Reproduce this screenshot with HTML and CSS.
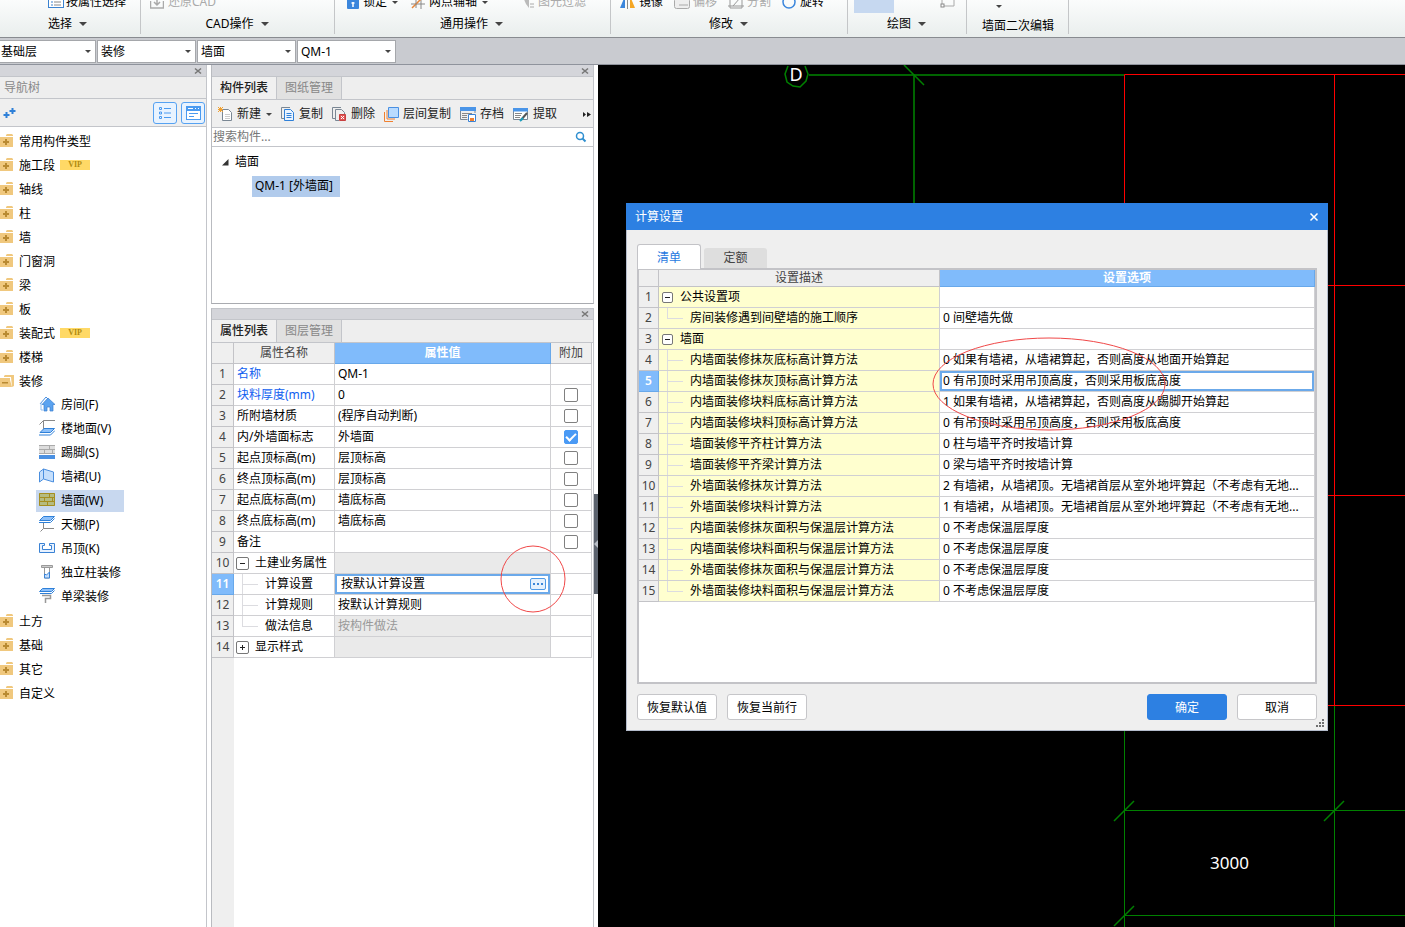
FILE: index.html
```html
<!DOCTYPE html>
<html lang="zh-CN">
<head>
<meta charset="utf-8">
<title>计算设置</title>
<link rel="stylesheet" href="styles.css">
</head>
<body>
<svg class="defs" aria-hidden="true">
  <symbol id="folder" viewBox="0 0 14 14"><path fill="#f0c87e" d="M0 3h13v10H0zM6 1l1-1h5l1 1v1H6z"/><path fill="#b98a32" d="M5 5h2v2h2v2H7v2H5V9H3V7h2z"/></symbol>
  <symbol id="folder-open" viewBox="0 0 14 14"><path fill="#f0c87e" d="M0 4h10v2l2 7H0z"/><path fill="#f0c87e" d="M4 2l1-1h9v11l-2 1-1-10H4z"/><path fill="#b98a32" d="M2 8h6v1.500H2z"/></symbol>
  <symbol id="close" viewBox="0 0 8 8"><path d="M1 1.500l6 5M7 1.500l-6 5" stroke="#777" stroke-width="1.600"/></symbol>
</svg>
<div class="app">
  <header class="ribbon">
    <section class="group g-select">
      <div class="tools"><button class="tool"><svg width="16" height="14"><rect x=".5" y=".5" width="15" height="12" fill="#fff" stroke="#3b82d0"/><path d="M3 4h2M3 7h2M3 10h2" stroke="#3b82d0"/><path d="M6 4h7M6 7h7M6 10h7" stroke="#888"/></svg>按属性选择</button></div>
      <button class="caption">选择<i class="caret big"></i></button>
    </section>
    <section class="group g-cad">
      <div class="tools"><button class="tool off"><svg width="14" height="14"><path d="M.5 6v7h13V6M7 2v8M4 7l3 3 3-3" fill="none" stroke="#aaa" stroke-width="1.500"/></svg>还原CAD</button></div>
      <button class="caption">CAD操作<i class="caret big"></i></button>
    </section>
    <section class="group g-common">
      <div class="tools">
        <button class="tool"><svg width="12" height="14"><rect y="3" width="12" height="11" rx="1" fill="#3b86dc"/><path d="M6 7v5M4.500 8h3" stroke="#fff" stroke-width="1.500"/></svg>锁定<i class="caret"></i></button>
        <button class="tool"><svg width="14" height="14"><path d="M0 9h14M10 2v12" stroke="#888"/><path d="M1 13L11 3" stroke="#e8863a" stroke-width="1.500"/><path d="M5 4v9" stroke="#888"/></svg>两点辅轴<i class="caret"></i></button>
        <button class="tool off"><svg width="11" height="14"><path d="M0 2h6v11L3 9z" fill="#bbb"/><path d="M7 9h4M7 12h4" stroke="#aaa"/></svg>图元过滤</button>
      </div>
      <button class="caption">通用操作<i class="caret big"></i></button>
    </section>
    <section class="group g-edit">
      <div class="tools">
        <button class="tool"><svg width="15" height="14"><path d="M5 1v12H0z" fill="#3b86dc"/><path d="M10 1v12h5z" fill="#f5a623"/><path d="M7.500 0v14" stroke="#888"/></svg>镜像</button>
        <button class="tool off tight"><svg width="16" height="14"><rect x=".5" y="3.500" width="15" height="10" rx="2" fill="#eee" stroke="#aaa"/><path d="M5 10h9" stroke="#aaa"/></svg>偏移</button>
        <button class="tool off tight"><svg width="16" height="14"><path d="M2 1v12h12V1M0 11h16M5 11l7-8" fill="none" stroke="#999"/></svg>分割</button>
        <button class="tool"><svg width="14" height="14"><circle cx="7" cy="7" r="6" fill="none" stroke="#3b86dc" stroke-width="1.500"/></svg>旋转</button>
      </div>
      <button class="caption">修改<i class="caret big"></i></button>
    </section>
    <section class="group g-draw">
      <div class="tools"><span class="active-tool"></span><svg width="16" height="14"><path d="M2 10V2h12v9H4" fill="none" stroke="#aaa"/><rect x="1" y="9" width="3" height="3" fill="#fff" stroke="#888"/></svg></div>
      <button class="caption">绘图<i class="caret big"></i></button>
    </section>
    <section class="group g-second">
      <div class="tools"><i class="caret"></i></div>
      <div class="caption low">墙面二次编辑</div>
    </section>
  </header>

  <nav class="context">
    <span class="pick"><select aria-label="楼层"><option>基础层</option></select></span>
    <span class="pick"><select aria-label="类别"><option>装修</option></select></span>
    <span class="pick"><select aria-label="类型"><option>墙面</option></select></span>
    <span class="pick"><select aria-label="构件"><option>QM-1</option></select></span>
  </nav>

  <main class="work">
    <aside class="panel nav">
      <div class="strip"><button class="x" aria-label="关闭"><svg width="8" height="8"><use href="#close"/></svg></button></div>
      <h2 class="nav-title">导航树</h2>
      <div class="nav-tools">
        <svg class="plus" width="13" height="12"><path d="M3.500 5v6M0.500 8h6M9.500 1v6M6.500 4h6" stroke="#2f80d8" stroke-width="2"/></svg>
        <button class="square" aria-label="列表"><svg width="14" height="14"><path d="M1.500 1.500h2v2h-2zM1.500 6h2v2h-2zM1.500 10.500h2v2h-2z" fill="none" stroke="#4a9af0"/><path d="M6 2.500h7M6 7h7M6 11.500h7" stroke="#4a9af0"/></svg></button>
        <button class="square" aria-label="窗口"><svg width="15" height="14"><rect x=".5" y=".5" width="14" height="13" fill="#fff" stroke="#4a9af0"/><path d="M0 0h15v5H0z" fill="#4a9af0"/><path d="M2 2.500h5M9 2.500h1M12 2.500h1" stroke="#fff"/><path d="M3 7.500h9M3 10.500h5" stroke="#4a9af0"/></svg></button>
      </div>
      <ul class="tree">
        <li><button><svg><use href="#folder"/></svg>常用构件类型</button></li>
        <li><button><svg><use href="#folder"/></svg>施工段<b class="vip">VIP</b></button></li>
        <li><button><svg><use href="#folder"/></svg>轴线</button></li>
        <li><button><svg><use href="#folder"/></svg>柱</button></li>
        <li><button><svg><use href="#folder"/></svg>墙</button></li>
        <li><button><svg><use href="#folder"/></svg>门窗洞</button></li>
        <li><button><svg><use href="#folder"/></svg>梁</button></li>
        <li><button><svg><use href="#folder"/></svg>板</button></li>
        <li><button><svg><use href="#folder"/></svg>装配式<b class="vip">VIP</b></button></li>
        <li><button><svg><use href="#folder"/></svg>楼梯</button></li>
        <li><button><svg><use href="#folder-open"/></svg>装修</button>
          <ul>
            <li><button><svg viewBox="0 0 16 16"><path d="M1 8l6-7 2 2" fill="#fff" stroke="#4a90e2"/><path d="M2 7v7h2" fill="none" stroke="#8fbdf0"/><path d="M9 2l7 6.500h-2V15h-3v-4H8v4H5V8.500H3z" fill="#5ba3f0" stroke="#3a7fd0" stroke-width=".7"/></svg>房间(F)</button></li>
            <li><button><svg viewBox="0 0 16 16"><path d="M.5 4.500l4-4H16M4.500.5V10" fill="none" stroke="#888"/><path d="M1 12.500l4-4h10.500l-4 4z" fill="#8cc0fa" stroke="#2f80d8"/><path d="M0 15h11.500l4.500-4.500" fill="none" stroke="#2f80d8"/></svg>楼地面(V)</button></li>
            <li><button><svg viewBox="0 0 16 16"><path fill="#ddd" d="M0 1h16v9H0z"/><path d="M0 1.500h16M0 5.500h16M0 9.500h16M10.500 1v4M5.500 5v4M13.500 5v4" stroke="#aaa"/><path fill="#4a90e2" d="M0 11h16v4H0z"/></svg>踢脚(S)</button></li>
            <li><button><svg viewBox="0 0 16 16"><path d="M.5 4l4-3v10l-4 3zM4.500 1l10 3v10l-10-3z" fill="#c5dffc" stroke="#4a8ede"/></svg>墙裙(U)</button></li>
            <li><button class="chosen" aria-current="true"><svg viewBox="0 0 16 16"><path fill="#b5bb80" d="M0 1h16v13H0z"/><path d="M.5 1.500h15v12H.5zM0 5.500h16M0 9.500h16M10.500 1v4M5.500 5v4M13.500 5v4M8.500 9v4" fill="none" stroke="#a58e20"/></svg>墙面(W)</button></li>
            <li><button><svg viewBox="0 0 16 16"><path d="M.5 4.500l4-4h11l-4 4z" fill="#8cc0fa" stroke="#2f80d8"/><path d="M0 6.500h11.500l4-4" fill="none" stroke="#2f80d8"/><path d="M4.500 7v5.500H15M4.500 12.500l-3 3" fill="none" stroke="#888"/></svg>天棚(P)</button></li>
            <li><button><svg viewBox="0 0 16 16"><path d="M.5 3.500h5v2h-2v4h9v-4h-2v-2h5v9H.5z" fill="#e8f2ff" stroke="#3a82d4"/></svg>吊顶(K)</button></li>
            <li><button><svg viewBox="0 0 16 16"><path d="M2.500 1.500h11v2h-11z" fill="#ccc" stroke="#999"/><path d="M5.500 4v10h5V4" fill="#fff" stroke="#999"/><path d="M5.500 10v4h5V8l-3 3-2-1" fill="#c5dffc" stroke="#3a82d4"/></svg>独立柱装修</button></li>
            <li><button><svg viewBox="0 0 16 16"><path d="M.5 3.500l3-3h12l-3 3z" fill="#8cc0fa" stroke="#2f80d8"/><path d="M1 5.500h11.500l3-3" fill="none" stroke="#2f80d8"/><path d="M3 7.500h8.500v3H6.500V15" fill="none" stroke="#999" stroke-width="1.500"/></svg>单梁装修</button></li>
          </ul>
        </li>
        <li><button><svg><use href="#folder"/></svg>土方</button></li>
        <li><button><svg><use href="#folder"/></svg>基础</button></li>
        <li><button><svg><use href="#folder"/></svg>其它</button></li>
        <li><button><svg><use href="#folder"/></svg>自定义</button></li>
      </ul>
    </aside>

    <div class="middle">
      <section class="panel parts">
        <div class="strip"><button class="x" aria-label="关闭"><svg width="8" height="8"><use href="#close"/></svg></button></div>
        <div class="tabs"><button class="tab on">构件列表</button><button class="tab">图纸管理</button></div>
        <div class="toolbar">
          <button><svg width="15" height="15"><path d="M4.500 2.500h6l3 3v8h-9z" fill="#fff" stroke="#7a8794"/><path d="M7 7.500h5M7 9.500h5M7 11.500h5" stroke="#ccc"/><path d="M0 0l5 5M5 0L0 5M2.500 0v5M0 2.500h5" stroke="#f0a030"/></svg>新建<i class="caret"></i></button>
          <button><svg width="14" height="15"><path d="M9 .5H.5v11H3" fill="none" stroke="#7a8794"/><path d="M3.500 2.500h6l3 3v8h-9z" fill="#eaf4ff" stroke="#2f80d8"/><path d="M5.500 6.500h5M5.500 8.500h5M5.500 10.500h5" stroke="#2f80d8"/></svg>复制</button>
          <button><svg width="15" height="15"><path d="M9 .5H.5v11H3M3.500 13.500v-11h6l3 3v2" fill="none" stroke="#7a8794"/><path d="M3.500 13.500H7" stroke="#7a8794"/><path d="M7.500 7.500h6v6h-6z" fill="#e05555" stroke="#c84040"/><path d="M9 9l3 3M12 9l-3 3" stroke="#fff"/></svg>删除</button>
          <button><svg width="15" height="15"><path d="M.5 5v9.500H9M3 3v9h8" fill="none" stroke="#f08030"/><path d="M4.500.5h10v10h-10z" fill="#b9dbff" stroke="#4a90e2"/></svg>层间复制</button>
          <button><svg width="16" height="15"><path d="M.5 3v9.500h7M15 3v3" fill="none" stroke="#7a8794"/><path d="M0 0h16v4H0z" fill="#4a95e8"/><path d="M2 6.500h10M2 8.500h5M2 10.500h5" stroke="#888"/><path d="M8.500 7.500h7v7h-7z" fill="#fff" stroke="#3a82d4"/><path d="M10 11h4v3h-4z" fill="#f08030"/></svg>存档</button>
          <button><svg width="16" height="15"><path d="M.5 4v8.500h14V4" fill="#fff" stroke="#7a8794"/><path d="M0 1h15v3.500H0z" fill="#4a95e8"/><path d="M2 6.500h7M2 8.500h6M2 10.500h5" stroke="#888"/><path d="M8 13l6-7" stroke="#555" stroke-width="2"/><path d="M7 14l3-3" stroke="#1ba0c0" stroke-width="2"/></svg>提取</button>
          <button class="more" aria-label="更多"><svg width="8" height="7"><path d="M0 1l3 2.500L0 6zM4 1l4 2.500L4 6z" fill="#222"/></svg></button>
        </div>
        <label class="search"><input type="text" placeholder="搜索构件..." aria-label="搜索构件"><svg width="12" height="12"><circle cx="5" cy="5" r="3.500" fill="none" stroke="#2f8fd0" stroke-width="1.500"/><path d="M7.500 7.500l3 3" stroke="#2f8fd0" stroke-width="2"/></svg></label>
        <ul class="list">
          <li><svg width="7" height="7"><path d="M6.500 0v6.500H0z" fill="#333"/></svg>墙面</li>
          <li class="leaf"><button>QM-1 [外墙面]</button></li>
        </ul>
      </section>

      <section class="panel props">
        <div class="strip"><button class="x" aria-label="关闭"><svg width="8" height="8"><use href="#close"/></svg></button></div>
        <div class="tabs"><button class="tab on">属性列表</button><button class="tab">图层管理</button></div>
        <div class="grid-area">
          <table class="grid prop-grid">
            <colgroup><col class="c-num"><col class="c-name"><col><col class="c-add"></colgroup>
            <thead><tr><th></th><th>属性名称</th><th class="hot">属性值</th><th>附加</th></tr></thead>
            <tbody>
              <tr><th>1</th><td class="link">名称</td><td>QM-1</td><td></td></tr>
              <tr><th>2</th><td class="link">块料厚度(mm)</td><td>0</td><td class="check"><input type="checkbox" aria-label="块料厚度附加"></td></tr>
              <tr><th>3</th><td>所附墙材质</td><td>(程序自动判断)</td><td class="check"><input type="checkbox" aria-label="所附墙材质附加"></td></tr>
              <tr><th>4</th><td>内/外墙面标志</td><td>外墙面</td><td class="check"><input type="checkbox" checked aria-label="内外墙面标志附加"></td></tr>
              <tr><th>5</th><td>起点顶标高(m)</td><td>层顶标高</td><td class="check"><input type="checkbox" aria-label="起点顶标高附加"></td></tr>
              <tr><th>6</th><td>终点顶标高(m)</td><td>层顶标高</td><td class="check"><input type="checkbox" aria-label="终点顶标高附加"></td></tr>
              <tr><th>7</th><td>起点底标高(m)</td><td>墙底标高</td><td class="check"><input type="checkbox" aria-label="起点底标高附加"></td></tr>
              <tr><th>8</th><td>终点底标高(m)</td><td>墙底标高</td><td class="check"><input type="checkbox" aria-label="终点底标高附加"></td></tr>
              <tr><th>9</th><td>备注</td><td></td><td class="check"><input type="checkbox" aria-label="备注附加"></td></tr>
              <tr><th>10</th><td><div class="node"><button class="fold minus" aria-label="收起"></button>土建业务属性</div></td><td class="dim"></td><td></td></tr>
              <tr><th class="hot">11</th><td><div class="child"><i class="branch"></i>计算设置</div></td><td class="focus"><div class="edit">按默认计算设置<button class="dots" aria-label="更多设置"><svg width="10" height="2"><path d="M0 0h2v2H0zM4 0h2v2H4zM8 0h2v2H8z" fill="#3a86d8"/></svg></button></div></td><td></td></tr>
              <tr><th>12</th><td><div class="child"><i class="branch"></i>计算规则</div></td><td>按默认计算规则</td><td></td></tr>
              <tr><th>13</th><td><div class="child"><i class="branch last"></i>做法信息</div></td><td class="dim">按构件做法</td><td></td></tr>
              <tr><th>14</th><td><div class="node"><button class="fold plus-box" aria-label="展开"></button>显示样式</div></td><td class="dim"></td><td></td></tr>
            </tbody>
          </table>
        </div>
        <svg class="mark mark-circle" width="66" height="68"><ellipse cx="33" cy="34" rx="32" ry="33" fill="none" stroke="#f04848"/></svg>
      </section>
    </div>

    <div class="gutter"><button class="handle" aria-label="折叠面板"><svg width="4" height="8"><path d="M4 0v8L0 4z" fill="#b9bec6"/></svg></button></div>

    <section class="canvas">
      <svg class="drawing">
        <g fill="none" stroke="#008000">
          <path d="M190 1l-3 8 2 8 6 4 7 1 6-6 2-7-3-8" stroke-width="1.500"/>
          <path d="M211 10H526M316 10v140" stroke="#006400" stroke-width="2"/>
          <path d="M306 0l20 20M516 756l20-20M726 756l20-20M516 861l20-20" stroke-width="1.500"/>
          <path d="M526.500 600v270M736.500 640v230"/>
          <path d="M526 745.500h2000M526 850.500h2000"/>
        </g>
        <g fill="none" stroke="#f00"><path d="M526.500 150V9.500H2600M736.500 9.500V640M700 220.500h2000M700 430.500h2000M700 640.500h2000"/></g>
        <text x="198" y="16" class="axis" text-anchor="middle">D</text>
        <text x="612" y="804" class="dim-text">3000</text>
      </svg>

      <div class="dialog" role="dialog" aria-label="计算设置">
        <div class="title">计算设置<button aria-label="关闭"><svg width="10" height="10"><path d="M1.500 1.500l7 7M8.500 1.500l-7 7" stroke="#fff" stroke-width="1.500"/></svg></button></div>
        <div class="dialog-body">
          <div class="dialog-tabs"><button class="on">清单</button><button>定额</button></div>
          <div class="frame">
            <table class="grid set-grid">
              <colgroup><col class="c-num"><col class="c-desc"><col></colgroup>
              <thead><tr><th></th><th>设置描述</th><th class="hot">设置选项</th></tr></thead>
              <tbody>
                <tr><th>1</th><td><div class="node"><button class="fold minus" aria-label="收起"></button>公共设置项</div></td><td></td></tr>
                <tr><th>2</th><td><div class="child"><i class="branch last"></i>房间装修遇到间壁墙的施工顺序</div></td><td>0 间壁墙先做</td></tr>
                <tr><th>3</th><td><div class="node"><button class="fold minus" aria-label="收起"></button>墙面</div></td><td></td></tr>
                <tr><th>4</th><td><div class="child"><i class="branch"></i>内墙面装修抹灰底标高计算方法</div></td><td>0 如果有墙裙，从墙裙算起，否则高度从地面开始算起</td></tr>
                <tr><th class="hot">5</th><td><div class="child"><i class="branch"></i>内墙面装修抹灰顶标高计算方法</div></td><td class="focus">0 有吊顶时采用吊顶高度，否则采用板底高度</td></tr>
                <tr><th>6</th><td><div class="child"><i class="branch"></i>内墙面装修块料底标高计算方法</div></td><td>1 如果有墙裙，从墙裙算起，否则高度从踢脚开始算起</td></tr>
                <tr><th>7</th><td><div class="child"><i class="branch"></i>内墙面装修块料顶标高计算方法</div></td><td>0 有吊顶时采用吊顶高度，否则采用板底高度</td></tr>
                <tr><th>8</th><td><div class="child"><i class="branch"></i>墙面装修平齐柱计算方法</div></td><td>0 柱与墙平齐时按墙计算</td></tr>
                <tr><th>9</th><td><div class="child"><i class="branch"></i>墙面装修平齐梁计算方法</div></td><td>0 梁与墙平齐时按墙计算</td></tr>
                <tr><th>10</th><td><div class="child"><i class="branch"></i>外墙面装修抹灰计算方法</div></td><td>2 有墙裙，从墙裙顶。无墙裙首层从室外地坪算起（不考虑有无地...</td></tr>
                <tr><th>11</th><td><div class="child"><i class="branch"></i>外墙面装修块料计算方法</div></td><td>1 有墙裙，从墙裙顶。无墙裙首层从室外地坪算起（不考虑有无地...</td></tr>
                <tr><th>12</th><td><div class="child"><i class="branch"></i>内墙面装修抹灰面积与保温层计算方法</div></td><td>0 不考虑保温层厚度</td></tr>
                <tr><th>13</th><td><div class="child"><i class="branch"></i>内墙面装修块料面积与保温层计算方法</div></td><td>0 不考虑保温层厚度</td></tr>
                <tr><th>14</th><td><div class="child"><i class="branch"></i>外墙面装修抹灰面积与保温层计算方法</div></td><td>0 不考虑保温层厚度</td></tr>
                <tr><th>15</th><td><div class="child"><i class="branch last"></i>外墙面装修块料面积与保温层计算方法</div></td><td>0 不考虑保温层厚度</td></tr>
              </tbody>
            </table>
          </div>
          <div class="actions">
            <button>恢复默认值</button><button>恢复当前行</button>
            <button class="primary">确定</button><button>取消</button>
          </div>
        </div>
        <svg class="grip" width="8" height="8"><path d="M6 0h2v2H6zM3 3h2v2H3zM6 3h2v2H6zM0 6h2v2H0zM3 6h2v2H3zM6 6h2v2H6z" fill="#707070"/></svg>
        <svg class="mark mark-ellipse" width="234" height="94"><ellipse cx="117" cy="47" rx="116" ry="46" fill="none" stroke="#f04848"/></svg>
      </div>
    </section>
  </main>
</div>
</body>
</html>
```
FILE: styles.css
```css
* { box-sizing: border-box; }
body {
  margin: 0;
  font: 12px/20px "Noto Sans", "Noto Sans CJK SC", sans-serif;
  color: #000;
  background: #fff;
}
button, input, select { font: inherit; color: inherit; }
button { border: 0; padding: 0; margin: 0; background: none; white-space: nowrap; }
ul { list-style: none; margin: 0; padding: 0; }
svg { flex: none; display: block; }
.defs { position: absolute; width: 0; height: 0; }
.app { height: 100vh; display: flex; flex-direction: column; overflow: hidden; }

.caret { flex: none; border: 3px solid transparent; border-top-color: #444; border-bottom: 0; }
.caret.big { border-width: 4px 4px 0; margin-left: 7px; }

/* ribbon */
.ribbon {
  flex: none;
  display: flex;
  height: 38px;
  overflow: hidden;
  background: linear-gradient(#fbfcfc, #e9eeed);
  border-bottom: 1px solid #888b90;
}
.group {
  display: flex;
  flex-direction: column;
  justify-content: flex-end;
  background: linear-gradient(#c4c6c8, #c4c6c8) right top / 1px 34px no-repeat;
}
.tools { flex: none; display: flex; align-items: center; height: 18px; }
.tool { display: flex; align-items: center; gap: 4px; height: 18px; }
.tool .caret { margin-left: 1px; }
.tool.off { color: #aaa; }
.tool.tight { gap: 3px; }
.caption { flex: none; display: flex; align-items: center; justify-content: center; height: 26px; }
.caption.low { padding-top: 4px; }
.g-select { width: 141px; }
.g-select .tools { padding-left: 48px; }
.g-select .tool { gap: 2px; }
.g-select .caption { padding-right: 6px; }
.g-cad { width: 194px; }
.g-cad .tools { padding-left: 9px; }
.g-cad .caption { padding-right: 2px; }
.g-common { width: 276px; }
.g-common .tools { padding-left: 12px; gap: 13px; }
.g-common .tool.off { margin-left: 22px; }
.g-common .caption { padding-right: 3px; }
.g-edit { width: 237px; }
.g-edit .tools { padding-left: 9px; gap: 11px; }
.g-edit .caption { padding-right: 2px; }
.g-draw { width: 119px; }
.g-draw .tools { padding-left: 6px; gap: 46px; }
.g-draw .caption { padding-right: 2px; }
.active-tool { width: 40px; height: 22px; background: #c6d8f0; }
.g-second { width: 102px; }
.g-second .tools { padding: 8px 0 0 29px; }

.context {
  flex: none;
  display: flex;
  gap: 1px;
  height: 27px;
  padding: 2px 0;
  background: #c9cbd0;
  border-bottom: 1px solid #8f939c;
}
.pick { position: relative; width: 99px; height: 23px; }
.pick:first-child { width: 96px; }
.pick::after {
  content: "";
  position: absolute;
  right: 5px;
  top: 10px;
  border: 3px solid transparent;
  border-top-color: #444;
  border-bottom: 0;
  pointer-events: none;
}
.pick select {
  appearance: none;
  width: 100%;
  height: 23px;
  padding: 0 3px;
  border: 1px solid #a5a7ab;
  border-radius: 0;
  background: #fff;
}
.pick:first-child select { border-left: 0; padding-left: 1px; }

/* panels */
.work {
  flex: 1;
  min-height: 0;
  display: grid;
  grid-template-columns: 207px 387px 4px minmax(0, 1fr);
}
.panel { border-right: 1px solid #c3c5ca; background: #fff; }
.strip {
  display: flex;
  justify-content: flex-end;
  align-items: center;
  height: 12px;
  padding-right: 4px;
  background: #d4d5da;
  border-bottom: 1px solid #c3c5ca;
}
.nav-title {
  margin: 0;
  height: 22px;
  padding-left: 4px;
  font-size: 12px;
  font-weight: 400;
  line-height: 22px;
  color: #888;
  background: #eee;
  border-bottom: 1px solid #c3c5ca;
}
.nav-tools {
  display: flex;
  align-items: center;
  gap: 4px;
  height: 28px;
  padding: 0 1px 0 3px;
  background: #efefef;
  border-bottom: 1px solid #c3c5ca;
}
.nav-tools .plus { margin-right: auto; }
.square {
  display: grid;
  place-items: center;
  width: 24px;
  height: 22px;
  border: 1px solid #56a2f2;
  border-radius: 3px;
  background: #e8f3ff;
}
.tree { padding-top: 3px; }
.tree button { display: flex; align-items: center; gap: 5px; height: 24px; }
.tree svg { width: 14px; height: 14px; margin-bottom: 2px; }
.tree ul { padding-left: 36px; }
.tree ul li { height: 24px; }
.tree ul button { height: 22px; gap: 6px; padding: 0 21px 0 3px; }
.tree ul svg { width: 16px; height: 16px; }
.tree .chosen { background: #c8d8ef; }
.vip {
  width: 30px;
  height: 10px;
  margin-bottom: 2px;
  font: 700 8px/10px "Liberation Serif", serif;
  color: #b08a10;
  background: #ffd966;
}

.middle { display: flex; flex-direction: column; gap: 4px; padding: 0 0 0 4px; min-height: 0; }
.parts, .props { border-left: 1px solid #b9bbc0; }
.parts { border-bottom: 1px solid #a9abb0; }
.tabs { display: flex; height: 23px; background: #eee; border-bottom: 1px solid #c3c5ca; }
.tab {
  width: 65px;
  height: 22px;
  color: #888;
  background: #e1e1e1;
  border-right: 1px solid #c3c5ca;
  line-height: 22px;
}
.tab.on { color: #222; font-weight: 500; background: #f0f0f0; }
.toolbar {
  display: flex;
  align-items: center;
  gap: 9px;
  height: 28px;
  padding: 1px 2px 0 6px;
  background: #efefef;
  border-bottom: 1px solid #c3c5ca;
  color: #222;
}
.toolbar button { display: flex; align-items: center; gap: 4px; }
.toolbar .caret { margin-left: 1px; }
.toolbar .more { margin-left: auto; }
.search { display: flex; align-items: center; height: 19px; padding-right: 6px; border-bottom: 1px solid #c3c5ca; }
.search input { flex: 1; min-width: 0; height: 18px; padding: 0 1px; border: 0; outline: 0; background: none; }
.search input::placeholder { color: #777; }
.list { height: 156px; padding: 3px 0 0 10px; }
.list li { display: flex; align-items: center; gap: 6px; height: 24px; }
.list .leaf { padding-left: 30px; }
.list .leaf button { height: 21px; padding: 0 7px 0 3px; background: #b1cbec; }

.props { position: relative; flex: 1; min-height: 0; border-top: 1px solid #c3c5ca; }
.props .strip { height: 11px; }
.grid-area {
  height: calc(100% - 34px);
  padding-right: 1px;
  background: linear-gradient(#efefef, #efefef) left / 22px 100% no-repeat;
}
.grid { width: 100%; table-layout: fixed; border-collapse: separate; border-spacing: 0; }
.grid th, .grid td {
  height: 21px;
  padding: 0 3px;
  line-height: 20px;
  border-right: 1px solid #d0d0d3;
  border-bottom: 1px solid #d0d0d3;
  white-space: nowrap;
  overflow: hidden;
}
.grid th { font-weight: 400; color: #444; background: #efefef; padding: 0; text-align: center; border-color: #c3c3c7; }
.grid th.hot { color: #fff; background: #80bbfb; border-color: #68a8ea; font-weight: 600; }
.grid td { text-align: left; background: #fff; }
.grid td.focus { box-shadow: inset 0 0 0 2px #6ba9ea; }
.grid td.dim { color: #999; background: #eaeaea; }
.grid td.link { color: #1060f0; }
.grid td.check { padding: 0; }
.prop-grid .c-num { width: 22px; }
.prop-grid .c-name { width: 101px; }
.prop-grid .c-add { width: 41px; }
.check input {
  appearance: none;
  display: grid;
  place-items: center;
  width: 14px;
  height: 14px;
  margin: 0 auto;
  border: 1px solid #808080;
  border-radius: 2px;
  background: #fff;
}
.check input:checked { border-color: #4a9af5; background: #4a9af5; }
.check input:checked::before {
  content: "";
  width: 8px;
  height: 4px;
  margin-bottom: 2px;
  border: solid #fff;
  border-width: 0 0 2px 2px;
  transform: rotate(-45deg);
}
.node, .child, .edit { display: flex; align-items: center; height: 20px; }
.node { gap: 6px; }
.child { gap: 7px; padding-left: 5px; }
.edit { justify-content: space-between; padding: 0 1px 0 3px; }
.branch {
  width: 16px;
  height: 20px;
  background:
    linear-gradient(#dcdce0, #dcdce0) left top / 1px 100% no-repeat,
    linear-gradient(#dcdce0, #dcdce0) left center / 100% 1px no-repeat;
}
.branch.last {
  background:
    linear-gradient(#dcdce0, #dcdce0) left top / 1px 50% no-repeat,
    linear-gradient(#dcdce0, #dcdce0) left center / 100% 1px no-repeat;
}
.fold {
  width: 13px;
  height: 13px;
  border: 1px solid #777;
  border-radius: 2px;
  background: linear-gradient(#222, #222) center / 5px 1px no-repeat, #fff;
}
.plus-box {
  background:
    linear-gradient(#222, #222) center / 5px 1px no-repeat,
    linear-gradient(#222, #222) center / 1px 5px no-repeat, #fff;
}
.prop-grid .node { margin-left: -1px; }
.dots {
  display: grid;
  place-items: center;
  width: 16px;
  height: 12px;
  border: 1px solid #4f9ae6;
  border-radius: 2px;
  background: #e5f1fd;
}
.mark { position: absolute; pointer-events: none; }
.mark-circle { left: 288px; top: 236px; }

.gutter { display: flex; flex-direction: column; padding-top: 429px; }
.handle { display: grid; place-items: center; width: 4px; height: 100px; background: #5b626d; }

/* drawing area */
.canvas { position: relative; overflow: hidden; background: #000; }
.drawing { width: 100%; height: 100%; }
.axis { font-size: 18px; fill: #fff; }
.dim-text { font-size: 17px; fill: #fff; }

.dialog {
  position: absolute;
  left: 28px;
  top: 138px;
  width: 702px;
  background: #efefef;
  border: 1px solid #b4bccb;
  border-top: 0;
}
.title {
  display: flex;
  justify-content: space-between;
  align-items: center;
  height: 27px;
  margin: 0 -1px;
  padding: 0 9px;
  color: #fff;
  background: #2d80e2;
}
.dialog-body { padding: 14px 10px 10px; }
.dialog-tabs { display: flex; align-items: flex-end; gap: 3px; height: 24px; }
.dialog-tabs button { width: 63px; height: 20px; color: #444; background: #dedede; border-radius: 3px 3px 0 0; }
.dialog-tabs .on {
  position: relative;
  width: 64px;
  height: 25px;
  margin-bottom: -1px;
  padding-top: 1px;
  color: #1f7ae0;
  background: #fff;
  border: 1px solid #c3c3c7;
  border-bottom: 0;
}
.frame { min-height: 416px; border: 2px solid #c3c3c7; background: #fff; }
.set-grid .c-num { width: 20px; }
.set-grid .c-desc { width: 281px; }
.set-grid thead th { height: 17px; line-height: 16px; }
.set-grid td:nth-child(2) { background: #ffffcf; }
.set-grid .fold { width: 11px; height: 11px; }
.set-grid .node { gap: 7px; }
.actions { display: flex; gap: 10px; margin-top: 10px; }
.actions button {
  width: 80px;
  height: 26px;
  padding-top: 1px;
  border: 1px solid #c6c6c9;
  border-radius: 3px;
  background: #fff;
}
.actions .primary { margin-left: auto; color: #fff; background: #2d80e2; border-color: #2d80e2; }
.grip { position: absolute; right: 3px; bottom: 3px; }
.mark-ellipse { left: 305px; top: 134px; }
```
